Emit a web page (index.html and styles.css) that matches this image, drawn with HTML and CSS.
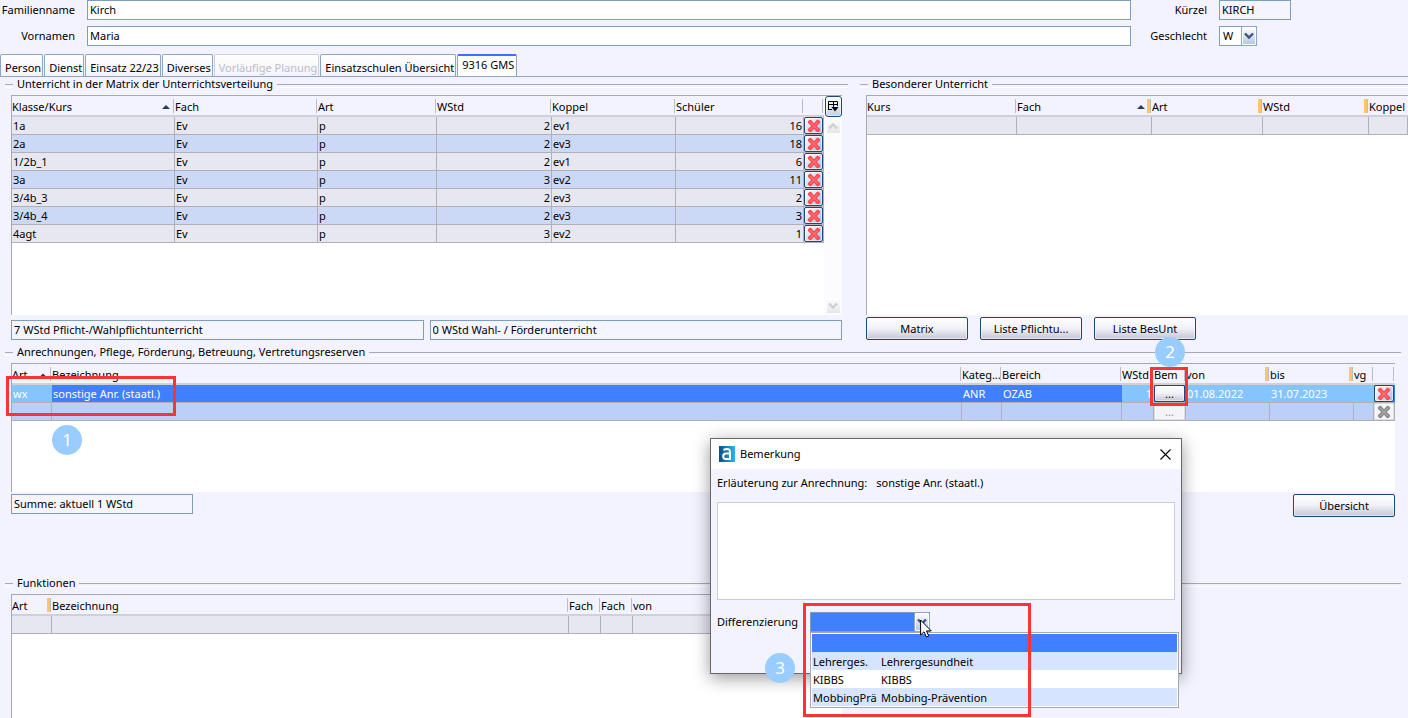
FILE: index.html
```html
<!DOCTYPE html>
<html lang="de">
<head>
<meta charset="utf-8">
<title>Lehrkraft – Kirch</title>
<link rel="stylesheet" href="styles.css">
</head>
<body>
<svg class="defs" aria-hidden="true">
  <symbol id="cross" viewBox="0 0 14 14"><path d="M2.5 1 L4 .8 L7 4.2 L10 .8 L11.5 1 L13.2 2.6 L13 4 L9.8 7 L13 10 L13.2 11.4 L11.5 13 L10 13.2 L7 9.8 L4 13.2 L2.5 13 L.8 11.4 L1 10 L4.2 7 L1 4 L.8 2.6 Z" fill="currentColor"/><path d="M3 3 L11 11 M11 3 L3 11" fill="none" stroke="#fff" stroke-opacity=".2" stroke-width="1.4"/></symbol>
  <symbol id="chevron" viewBox="0 0 10 8"><path d="M1 1.5 L5 5.5 L9 1.5" fill="none" stroke="currentColor" stroke-width="2.4"/></symbol>
  <symbol id="sort" viewBox="0 0 8 4"><path d="M0 4 L4 0 L8 4 Z" fill="currentColor"/></symbol>
</svg>
<main class="page">
  <form class="head">
    <label for="fam">Familienname</label><input class="field" id="fam" value="Kirch">
    <label for="krz">Kürzel</label><input class="field readonly short" id="krz" value="KIRCH" readonly>
    <label for="vor">Vornamen</label><input class="field" id="vor" value="Maria">
    <label for="sex">Geschlecht</label>
    <span class="combo combo-sex"><select id="sex"><option>W</option><option>M</option></select><span class="combo-arrow"><svg><use href="#chevron"/></svg></span></span>
  </form>

  <nav class="tabs" role="tablist">
    <button class="tab" role="tab">Person</button>
    <button class="tab" role="tab">Dienst</button>
    <button class="tab" role="tab">Einsatz 22/23</button>
    <button class="tab" role="tab">Diverses</button>
    <button class="tab" role="tab" disabled>Vorläufige Planung</button>
    <button class="tab" role="tab">Einsatzschulen Übersicht</button>
    <button class="tab active" role="tab" aria-selected="true">9316 GMS</button>
  </nav>

  <div class="columns">
    <section class="group">
      <h2 class="legend">Unterricht in der Matrix der Unterrichtsverteilung</h2>
      <div class="group-body">
        <div class="grid-box tall">
          <div class="grid-main">
            <table class="grid">
              <colgroup><col class="w163"><col class="w143"><col class="w119"><col class="w115"><col class="w124"><col class="w128"><col class="w20"></colgroup>
              <thead><tr><th>Klasse/Kurs<svg class="sort"><use href="#sort"/></svg></th><th>Fach</th><th>Art</th><th>WStd</th><th>Koppel</th><th>Schüler</th><th></th></tr></thead>
              <tbody>
                <tr><td>1a</td><td>Ev</td><td>p</td><td class="num">2</td><td>ev1</td><td class="num">16</td><td class="act"><button class="del" aria-label="Löschen"><svg><use href="#cross"/></svg></button></td></tr>
                <tr><td>2a</td><td>Ev</td><td>p</td><td class="num">2</td><td>ev3</td><td class="num">18</td><td class="act"><button class="del" aria-label="Löschen"><svg><use href="#cross"/></svg></button></td></tr>
                <tr><td>1/2b_1</td><td>Ev</td><td>p</td><td class="num">2</td><td>ev1</td><td class="num">6</td><td class="act"><button class="del" aria-label="Löschen"><svg><use href="#cross"/></svg></button></td></tr>
                <tr><td>3a</td><td>Ev</td><td>p</td><td class="num">3</td><td>ev2</td><td class="num">11</td><td class="act"><button class="del" aria-label="Löschen"><svg><use href="#cross"/></svg></button></td></tr>
                <tr><td>3/4b_3</td><td>Ev</td><td>p</td><td class="num">2</td><td>ev3</td><td class="num">2</td><td class="act"><button class="del" aria-label="Löschen"><svg><use href="#cross"/></svg></button></td></tr>
                <tr><td>3/4b_4</td><td>Ev</td><td>p</td><td class="num">2</td><td>ev3</td><td class="num">3</td><td class="act"><button class="del" aria-label="Löschen"><svg><use href="#cross"/></svg></button></td></tr>
                <tr><td>4agt</td><td>Ev</td><td>p</td><td class="num">3</td><td>ev2</td><td class="num">1</td><td class="act"><button class="del" aria-label="Löschen"><svg><use href="#cross"/></svg></button></td></tr>
              </tbody>
            </table>
          </div>
          <div class="scroller">
            <button class="col-config" aria-label="Spalten"><svg viewBox="0 0 11 11"><path d="M.5 9 V.5 H9.5 V5 M.5 3.5 H9.5 M5.5 .5 V6 M.5 8.5 H4" fill="none" stroke="#000"/><path d="M3.5 6 H10.5 L7 10.5 Z" fill="#000"/></svg></button>
            <button class="scroll-btn up" aria-label="Nach oben"><svg><use href="#chevron"/></svg></button>
            <span class="track"></span>
            <button class="scroll-btn" aria-label="Nach unten"><svg><use href="#chevron"/></svg></button>
          </div>
        </div>
        <div class="fields">
          <input class="field readonly" aria-label="Pflichtunterricht" value="7 WStd Pflicht-/Wahlpflichtunterricht" readonly>
          <input class="field readonly" aria-label="Wahlunterricht" value="0 WStd Wahl- / Förderunterricht" readonly>
        </div>
      </div>
    </section>

    <section class="group open">
      <h2 class="legend">Besonderer Unterricht</h2>
      <div class="group-body">
        <div class="grid-box tall">
          <div class="grid-main">
            <table class="grid">
              <colgroup><col class="w150"><col class="w135"><col class="w111"><col class="w106"><col></colgroup>
              <thead><tr><th>Kurs</th><th class="mark">Fach<svg class="sort"><use href="#sort"/></svg></th><th class="mark">Art</th><th class="mark">WStd</th><th>Koppel</th></tr></thead>
              <tbody><tr><td></td><td></td><td></td><td></td><td></td></tr></tbody>
            </table>
          </div>
        </div>
        <div class="buttons">
          <button class="btn">Matrix</button>
          <button class="btn">Liste Pflichtu...</button>
          <button class="btn">Liste BesUnt</button>
        </div>
      </div>
    </section>
  </div>

  <section class="group wide">
    <h2 class="legend">Anrechnungen, Pflege, Förderung, Betreuung, Vertretungsreserven</h2>
    <div class="group-body">
      <div class="grid-box medium">
        <div class="grid-main">
          <table class="grid selected">
            <colgroup><col class="w40"><col><col class="w40"><col class="w120"><col class="w32"><col class="w32"><col class="w84"><col class="w84"><col class="w20"><col class="w21"></colgroup>
            <thead><tr><th>Art<svg class="sort small"><use href="#sort"/></svg></th><th>Bezeichnung</th><th>Kateg...</th><th>Bereich</th><th>WStd</th><th>Bem</th><th class="mark">von</th><th class="mark">bis</th><th>vg</th><th></th></tr></thead>
            <tbody>
              <tr class="current"><td class="light">wx</td><td>sonstige Anr. (staatl.)</td><td>ANR</td><td>OZAB</td><td class="num light">1</td><td class="act"><button class="more">...</button></td><td class="light">01.08.2022</td><td class="light">31.07.2023</td><td class="light"></td><td class="act"><button class="del" aria-label="Löschen"><svg><use href="#cross"/></svg></button></td></tr>
              <tr><td></td><td></td><td></td><td></td><td></td><td class="act"><button class="more" disabled>...</button></td><td></td><td></td><td></td><td class="act"><button class="del" aria-label="Löschen" disabled><svg><use href="#cross"/></svg></button></td></tr>
            </tbody>
          </table>
        </div>
      </div>
      <div class="summary">
        <input class="field readonly" aria-label="Summe" value="Summe: aktuell 1 WStd" readonly>
        <button class="btn">Übersicht</button>
      </div>
    </div>
  </section>

  <section class="group wide functions">
    <h2 class="legend">Funktionen</h2>
    <div class="group-body">
      <div class="grid-box">
        <div class="grid-main">
          <table class="grid">
            <colgroup><col class="w40"><col class="w517"><col class="w32"><col class="w32"><col></colgroup>
            <thead><tr><th class="mark">Art</th><th>Bezeichnung</th><th>Fach</th><th>Fach</th><th>von</th></tr></thead>
            <tbody><tr><td></td><td></td><td></td><td></td><td></td></tr></tbody>
          </table>
        </div>
      </div>
    </div>
  </section>

  <div class="dialog" role="dialog" aria-labelledby="dlg-title">
    <header class="titlebar">
      <svg class="logo" viewBox="0 0 16 16" aria-hidden="true"><defs><linearGradient id="lg"><stop offset="0" stop-color="#0b4f86"/><stop offset="1" stop-color="#2bb6ea"/></linearGradient></defs><rect width="16" height="16" fill="url(#lg)"/><path d="M4.5 4 Q7.5 2.4 9.8 3.4 Q11 4 11 6 V13 H6.8 Q4.2 13 4.2 10.2 Q4.2 7.6 7 7.6 H11" fill="none" stroke="#fff" stroke-width="2"/></svg>
      <h3 id="dlg-title">Bemerkung</h3>
      <button class="close" aria-label="Schließen"><svg viewBox="0 0 11 11"><path d="M.5 .5 L10.5 10.5 M10.5 .5 L.5 10.5" stroke="#000" stroke-width="1.1"/></svg></button>
    </header>
    <div class="dialog-body">
      <label class="explain" for="note"><span>Erläuterung zur Anrechnung:</span><span>sonstige Anr. (staatl.)</span></label>
      <textarea id="note"></textarea>
      <div class="diff-row">
        <label for="diff">Differenzierung</label>
        <span class="combo combo-diff"><select id="diff"><option></option><option>Lehrerges.</option><option>KIBBS</option><option>MobbingPrä</option></select><span class="combo-arrow"><svg><use href="#chevron"/></svg></span>
          <ul class="popup" role="listbox">
            <li class="picked" role="option" aria-selected="true"></li>
            <li role="option"><span>Lehrerges.</span><span>Lehrergesundheit</span></li>
            <li role="option"><span>KIBBS</span><span>KIBBS</span></li>
            <li role="option"><span>MobbingPrä</span><span>Mobbing-Prävention</span></li>
          </ul>
        </span>
      </div>
    </div>
  </div>

  <span class="frame frame-1"></span><span class="badge badge-1">1</span>
  <span class="frame frame-2"></span><span class="badge badge-2">2</span>
  <span class="frame frame-3"></span><span class="badge badge-3">3</span>
  <svg class="cursor" viewBox="0 0 12 19" aria-hidden="true"><path d="M.6 1 V16 L4 12.8 L6.4 18 L8.8 17 L6.5 11.9 H11.2 Z" fill="#fff" stroke="#000"/></svg>
</main>
</body>
</html>
```
FILE: styles.css
```css
* { box-sizing: border-box; }
body { margin: 0; background: #f3f3ff; color: #000; font: 11px/16px "Noto Sans", "Open Sans", sans-serif; }
input, select, button, textarea { font: inherit; color: inherit; margin: 0; }
h2, h3, ul { margin: 0; padding: 0; font: inherit; list-style: none; }
.defs { display: none; }
.page { position: relative; min-height: 100vh; display: flex; flex-direction: column; overflow: hidden; }

.head { display: grid; grid-template-columns: 75px 1fr 64px 189px; column-gap: 12px; row-gap: 6px; align-items: center; }
.head label { text-align: right; white-space: nowrap; }
.field { width: 100%; height: 20px; padding: 0 2px 2px; border: 1px solid #7f9dbe; border-radius: 0; background: #fff; outline: 0; }
.readonly { background: #f5f5ff; }
.short { width: 72px; }

.combo { position: relative; display: flex; height: 20px; }
.combo select { flex: 1; height: 20px; padding: 0 3px; appearance: none; border: 1px solid #7f9dbe; border-radius: 0; background: #fff; outline: 0; }
.combo-arrow { position: absolute; right: 0; top: 0; width: 16px; height: 20px; display: grid; place-items: center; border: 1px solid #8ea6cc; border-radius: 2px; background: linear-gradient(#fff, #b4c3e8); box-shadow: inset 0 0 0 1px #fff; color: #3c5480; pointer-events: none; }
.combo-arrow svg { width: 10px; height: 8px; }
.combo-sex { width: 38px; }
.combo-diff { width: 120px; }
.combo-diff select { background: #4080ff; }

.tabs { display: flex; align-items: flex-end; gap: 1px; height: 23px; margin-top: 8px; border-bottom: 1px solid #8ea6c4; }
.tab { height: 22px; padding: 4px 1px 0 4px; border: 1px solid #8ea6c4; border-bottom: 0; border-radius: 2px 2px 0 0; background: linear-gradient(#fff, #f3f3fb); white-space: nowrap; line-height: 16px; }
.tab:disabled { color: #bdbdc6; border-color: #d0d0dc; }
.tab.active { height: 22px; padding: 0 2px 2px 4px; border-top: 2px solid #3b74f0; background: #fff; }

.columns { display: grid; grid-template-columns: minmax(0, 843fr) minmax(0, 548fr); column-gap: 12px; padding-left: 5px; }
.group { display: flex; flex-direction: column; min-width: 0; }
.group.wide { margin: 5px 7px 0 5px; }
.legend { display: flex; align-items: flex-start; gap: 4px; height: 15px; line-height: 14px; white-space: nowrap; }
.legend::before, .legend::after { content: ""; height: 2px; margin-top: 7px; border-top: 1px solid #a8a8b2; border-bottom: 1px solid #fff; }
.legend::before { width: 8px; }
.legend::after { flex: 1; }
.group-body { padding: 3px 6px 0; }
.open .group-body { padding-right: 0; }

.grid-box { display: flex; background: #fff; border: solid #a8a8b2; border-width: 1px 0 0 1px; }
.tall { height: 220px; }
.medium { height: 129px; }
.grid-main { flex: 1; min-width: 0; }
.grid { width: 100%; table-layout: fixed; border-collapse: separate; border-spacing: 0; }
.grid th, .grid td { padding: 0 1px; text-align: left; font-weight: normal; white-space: nowrap; overflow: hidden; }
.grid th { position: relative; height: 21px; padding: 3px 0 0; line-height: 16px; background: #f3f3ff; border-bottom: 2px solid #d0d0da; }
.grid th::after { content: ""; position: absolute; right: 1px; top: 3px; bottom: 2px; width: 1px; background: #bcbcc6; }
.grid th.mark::after { width: 3px; border-right: 1px solid #bcbcc6; background: #ffc665; }
.grid th:last-child:not(:empty)::after { display: none; }
.grid td { height: 18px; line-height: 16px; background: #e7e7f1; border: solid #b0b0b6; border-width: 0 1px 1px 0; }
.grid tbody tr:nth-child(even) td { background: #cbd9f6; }
.grid .num { text-align: right; }
.grid .act { padding: 0; }
.grid.selected tbody tr td { background: #bccff8; }
.grid.selected tbody .current td { background: #4080ff; color: #fff; border-right-color: #4080ff; }
.grid.selected tbody .current .light { background: #84c4ff; border-right-color: #84c4ff; }
.sort { position: absolute; right: 5px; top: 9px; width: 8px; height: 4px; color: #263c58; }
.mark .sort { right: 7px; }
.sort.small { width: 6px; right: 6px; }
.w20 { width: 20px; } .w21 { width: 21px; } .w32 { width: 32px; } .w40 { width: 40px; } .w84 { width: 84px; }
.w106 { width: 106px; } .w111 { width: 111px; } .w115 { width: 115px; } .w119 { width: 119px; } .w120 { width: 120px; }
.w124 { width: 124px; } .w128 { width: 128px; } .w135 { width: 135px; } .w143 { width: 143px; } .w150 { width: 150px; }
.w163 { width: 163px; } .w517 { width: 517px; }

.btn, .del, .more, .col-config { border: 1px solid #1e4678; border-radius: 2px; background: linear-gradient(#fff, #f0f0f8 50%, #c6c6d4); box-shadow: inset 0 0 0 1px #fff8; padding: 0; white-space: nowrap; }
.del { display: grid; place-items: center; width: 100%; height: 17px; color: #f94a50; background: linear-gradient(135deg, #fff, #a9bce4); }
.del svg { width: 14px; height: 14px; }
.more { display: block; width: 100%; height: 17px; line-height: 14px; color: #000; }
.more:disabled, .del:disabled { border-color: #dcdce4; background: #f3f3f8; color: #8c8c8c; }

.scroller { display: flex; flex-direction: column; align-items: center; width: 18px; background: #fcfcff; }
.col-config { display: grid; place-items: center; width: 17px; height: 21px; margin-bottom: 1px; border-radius: 3px; background: linear-gradient(#fff, #c2cfec); }
.col-config svg { width: 11px; height: 11px; }
.scroll-btn { display: grid; place-items: center; width: 13px; height: 15px; padding: 0; border: 0; background: linear-gradient(#fff, #e6e6ea); color: #cfcfd4; margin-bottom: 2px; }
.scroll-btn svg { width: 10px; height: 8px; }
.scroll-btn.up svg { transform: rotate(180deg); }
.track { flex: 1; }

.fields { display: grid; grid-template-columns: 1fr 1fr; gap: 6px; margin-top: 5px; }
.buttons { display: flex; gap: 12px; margin-top: 2px; }
.btn { width: 102px; height: 23px; }
.summary { display: flex; justify-content: space-between; margin-top: 2px; }
.summary .field { width: 182px; }

.group.functions { flex: 1; margin-top: 59px; }
.functions .group-body { flex: 1; display: grid; grid-template-columns: minmax(0, 831fr) minmax(0, 553fr); }

.dialog { position: absolute; left: 710px; top: 438px; width: 472px; height: 236px; border: 1px solid #66666c; background: #f3f3ff; box-shadow: 0 4px 16px #0006; }
.titlebar { display: flex; align-items: center; gap: 5px; height: 30px; padding: 0 10px 0 8px; background: #fff; font-size: 11px; }
.titlebar h3 { flex: 1; }
.logo { width: 16px; height: 16px; }
.close { width: 11px; height: 11px; padding: 0; border: 0; background: none; display: grid; }
.dialog-body { padding: 6px; }
.explain { display: flex; gap: 9px; }
.dialog textarea { display: block; width: 100%; height: 98px; margin-top: 11px; border: 1px solid #cbcbd5; background: #fff; resize: none; outline: 0; }
.diff-row { display: grid; grid-template-columns: 81px 1fr; column-gap: 12px; align-items: center; margin-top: 12px; white-space: nowrap; }
.popup { position: absolute; left: 0; top: 20px; width: 369px; padding: 1px; border: 1px solid #a8a8b2; background: #fff; }
.popup li { display: grid; grid-template-columns: 68px 1fr; height: 18px; padding: 0 1px; line-height: 20px; }
.popup li:nth-child(even) { background: #d6e4ff; }
.popup li.picked { background: #4080ff; }

.frame { position: absolute; border: 3px solid #ff3333; pointer-events: none; }
.frame-1 { left: 6px; top: 376px; width: 170px; height: 40px; }
.frame-2 { left: 1150px; top: 367px; width: 38px; height: 39px; }
.frame-3 { left: 803px; top: 603px; width: 228px; height: 114px; }
.badge { position: absolute; width: 30px; height: 30px; border-radius: 50%; background: #99ccff; color: #fff; text-align: center; font-size: 17px; line-height: 29px; }
.badge-1 { left: 52px; top: 425px; }
.badge-2 { left: 1155px; top: 337px; }
.badge-3 { left: 765px; top: 653px; }
.cursor { position: absolute; left: 920px; top: 619px; width: 12px; height: 19px; }
```
